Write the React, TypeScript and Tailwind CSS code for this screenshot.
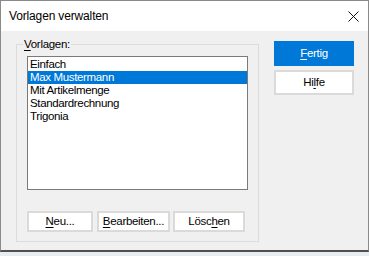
import React from "react";

const font = { fontFamily: '"Liberation Sans", Arial, sans-serif' };

const items = ["Einfach", "Max Mustermann", "Mit Artikelmenge", "Standardrechnung", "Trigonia"];

function Btn({ children, className }: { children: React.ReactNode; className: string }) {
    return (
        <button
            type="button"
            className={
                "flex items-center justify-center border-2 border-[#dadada] bg-white text-[11.5px] leading-none tracking-[-0.3px] text-black " +
                className
            }
        >
            {children}
        </button>
    );
}

export default function App() {
    const selected = 1;

    return (
        <div className="h-[256px] w-[369px] bg-[#e8edf1]" style={font}>
            <div className="flex h-[252px] flex-col border border-[#8a8a8a] border-b-[#505050] border-b-2">
                {/* title bar */}
                <div className="flex h-[30px] items-center justify-between bg-white pl-[8px] pr-[9px]">
                    <span className="text-[12px] tracking-[-0.15px] text-black">Vorlagen verwalten</span>
                    <svg width="11" height="11" viewBox="0 0 11 11">
                        <path d="M0.5 0.5 L10.5 10.5 M10.5 0.5 L0.5 10.5" stroke="#111" strokeWidth="1" />
                    </svg>
                </div>

                {/* body */}
                <div className="flex flex-1 gap-[15px] bg-[#f0f0f0] pl-[15px] pr-[14px] pt-[5px]">
                    <fieldset className="flex h-[206px] w-[243px] flex-col border border-[#dcdcdc] px-[10px] pb-[9px]">
                        <legend className="-ml-[4px] px-[1px] text-[11.5px] leading-[16px] tracking-[-0.3px] text-black">
                            <span className="underline underline-offset-2">V</span>orlagen:
                        </legend>
                        <div className="mt-[4px] h-[134px] w-full border border-[#7a7a7a] bg-white pt-[1px]">
                            {items.map((it, i) => (
                                <div
                                    key={it}
                                    className={
                                        "h-[13px] pl-[2px] text-[11.5px] leading-[13px] tracking-[-0.35px] " +
                                        (i === selected ? "bg-[#0078d7] text-white" : "text-black")
                                    }
                                >
                                    {it}
                                </div>
                            ))}
                        </div>
                        <div className="mt-auto flex">
                            <Btn className="h-[21px] w-[66px]">
                                <span className="underline underline-offset-2">N</span>eu...
                            </Btn>
                            <Btn className="ml-[4px] h-[21px] w-[73px]">
                                <span className="underline underline-offset-2">B</span>earbeiten...
                            </Btn>
                            <Btn className="ml-[3px] h-[21px] w-[72px]">
                                Lösc<span className="underline underline-offset-2">h</span>en
                            </Btn>
                        </div>
                    </fieldset>

                    <div className="flex w-[80px] flex-col gap-[4px] pt-[5px]">
                        <button
                            type="button"
                            className="flex h-[25px] items-center justify-center border border-[#0078d7] bg-[#0078d7] text-[11.5px] leading-none tracking-[-0.3px] text-white"
                        >
                            <span className="underline underline-offset-2">F</span>ertig
                        </button>
                        <Btn className="h-[25px] w-full">
                            Hi<span className="underline underline-offset-2">l</span>fe
                        </Btn>
                    </div>
                </div>
            </div>
        </div>
    );
}
